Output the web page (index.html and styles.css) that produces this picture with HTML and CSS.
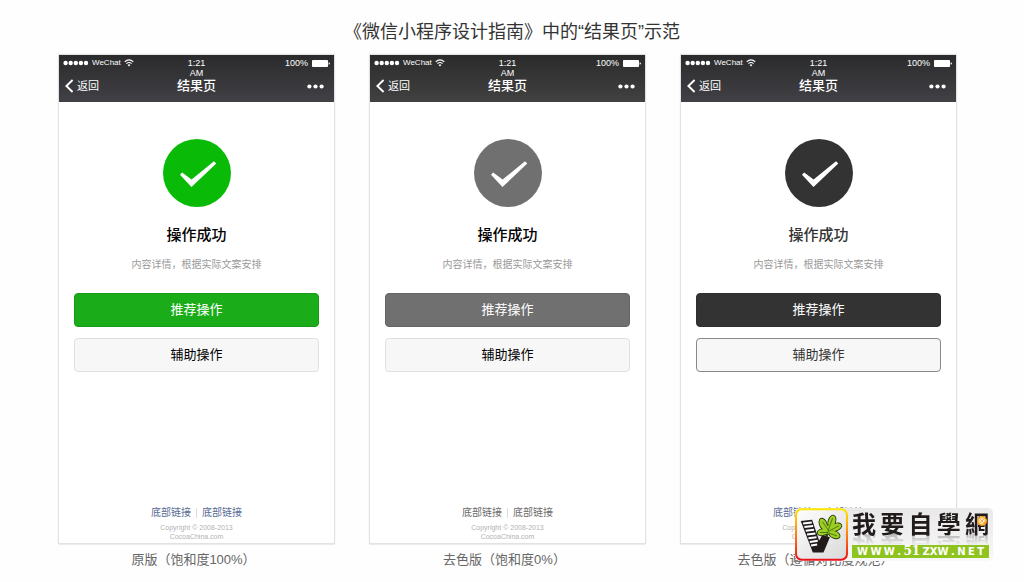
FILE: index.html
```html
<!DOCTYPE html>
<html lang="zh-CN">
<head>
<meta charset="utf-8">
<meta name="viewport" content="width=device-width, initial-scale=1">
<title>结果页示范</title>
<link rel="stylesheet" href="styles.css">
</head>
<body>
<svg class="sprite" aria-hidden="true">
  <symbol id="signal" viewBox="0 0 26 6"><g fill="#fff"><circle cx="2.6" cy="3" r="2.2"/><circle cx="7.7" cy="3" r="2.2"/><circle cx="12.8" cy="3" r="2.2"/><circle cx="17.9" cy="3" r="2.2"/><circle cx="23" cy="3" r="2.2"/></g></symbol>
  <symbol id="wifi" viewBox="0 0 10 8"><g fill="none" stroke="#fff" stroke-width="1.1"><path d="M.7 2.9Q5-1.1 9.3 2.9"/><path d="M2.4 4.7Q5 2.4 7.6 4.7"/></g><path d="M3.6 5.9Q5 4.8 6.4 5.9L5 7.4Z" fill="#fff"/></symbol>
  <symbol id="battery" viewBox="0 0 18 7"><rect width="16" height="7" rx=".8" fill="#fff"/><path d="M16.6 2.2Q18 2.6 18 3.5T16.6 4.8Z" fill="#fff"/></symbol>
  <symbol id="back" viewBox="0 0 9 14"><path d="M7.6 1L1.4 7L7.6 13" fill="none" stroke="#fff" stroke-width="1.9"/></symbol>
  <symbol id="more" viewBox="0 0 17 5"><g fill="#fff"><circle cx="2.4" cy="2.5" r="2.1"/><circle cx="8.5" cy="2.5" r="2.1"/><circle cx="14.6" cy="2.5" r="2.1"/></g></symbol>
  <symbol id="done" viewBox="0 0 68 68"><circle cx="34" cy="34" r="34" fill="currentColor"/><path d="M17 35.8L19.2 33.6L28.6 40.6L51 22.3L53.3 24.5L28.5 48Z" fill="#fff"/></symbol>
</svg>

<h1 class="page-title">《微信小程序设计指南》中的“结果页”示范</h1>

<main class="samples">
  <figure class="sample sample--original">
    <section class="phone">
      <header class="bar">
        <div class="status">
          <span class="carrier"><svg class="signal"><use href="#signal"/></svg>WeChat<svg class="wifi"><use href="#wifi"/></svg></span>
          <span class="time">1:21<br>AM</span>
          <span class="power">100%<svg class="battery"><use href="#battery"/></svg></span>
        </div>
        <nav class="nav">
          <button class="back" type="button"><svg class="back-icon"><use href="#back"/></svg>返回</button>
          <h2 class="nav-title">结果页</h2>
          <button class="more" type="button" aria-label="更多"><svg class="more-icon"><use href="#more"/></svg></button>
        </nav>
      </header>
      <div class="result">
        <svg class="done"><use href="#done"/></svg>
        <h3 class="result-title">操作成功</h3>
        <p class="result-text">内容详情，根据实际文案安排</p>
        <div class="actions">
          <button class="btn btn--primary" type="button">推荐操作</button>
          <button class="btn btn--default" type="button">辅助操作</button>
        </div>
      </div>
      <footer class="foot">
        <div class="links"><a href="#">底部链接</a><a href="#">底部链接</a></div>
        <p class="copyright">Copyright © 2008-2013<br>CocoaChina.com</p>
      </footer>
    </section>
    <figcaption class="caption">原版（饱和度100%）</figcaption>
  </figure>

  <figure class="sample sample--gray">
    <section class="phone">
      <header class="bar">
        <div class="status">
          <span class="carrier"><svg class="signal"><use href="#signal"/></svg>WeChat<svg class="wifi"><use href="#wifi"/></svg></span>
          <span class="time">1:21<br>AM</span>
          <span class="power">100%<svg class="battery"><use href="#battery"/></svg></span>
        </div>
        <nav class="nav">
          <button class="back" type="button"><svg class="back-icon"><use href="#back"/></svg>返回</button>
          <h2 class="nav-title">结果页</h2>
          <button class="more" type="button" aria-label="更多"><svg class="more-icon"><use href="#more"/></svg></button>
        </nav>
      </header>
      <div class="result">
        <svg class="done"><use href="#done"/></svg>
        <h3 class="result-title">操作成功</h3>
        <p class="result-text">内容详情，根据实际文案安排</p>
        <div class="actions">
          <button class="btn btn--primary" type="button">推荐操作</button>
          <button class="btn btn--default" type="button">辅助操作</button>
        </div>
      </div>
      <footer class="foot">
        <div class="links"><a href="#">底部链接</a><a href="#">底部链接</a></div>
        <p class="copyright">Copyright © 2008-2013<br>CocoaChina.com</p>
      </footer>
    </section>
    <figcaption class="caption">去色版（饱和度0%）</figcaption>
  </figure>

  <figure class="sample sample--contrast">
    <section class="phone">
      <header class="bar">
        <div class="status">
          <span class="carrier"><svg class="signal"><use href="#signal"/></svg>WeChat<svg class="wifi"><use href="#wifi"/></svg></span>
          <span class="time">1:21<br>AM</span>
          <span class="power">100%<svg class="battery"><use href="#battery"/></svg></span>
        </div>
        <nav class="nav">
          <button class="back" type="button"><svg class="back-icon"><use href="#back"/></svg>返回</button>
          <h2 class="nav-title">结果页</h2>
          <button class="more" type="button" aria-label="更多"><svg class="more-icon"><use href="#more"/></svg></button>
        </nav>
      </header>
      <div class="result">
        <svg class="done"><use href="#done"/></svg>
        <h3 class="result-title">操作成功</h3>
        <p class="result-text">内容详情，根据实际文案安排</p>
        <div class="actions">
          <button class="btn btn--primary" type="button">推荐操作</button>
          <button class="btn btn--default" type="button">辅助操作</button>
        </div>
      </div>
      <footer class="foot">
        <div class="links"><a href="#">底部链接</a><a href="#">底部链接</a></div>
        <p class="copyright">Copyright © 2008-2013<br>CocoaChina.com</p>
      </footer>
    </section>
    <figcaption class="caption">去色版（遵循对比度规范）</figcaption>
  </figure>
</main>

<aside class="watermark">
  <svg class="mark" viewBox="29 26 158 156" aria-hidden="true">
    <defs>
      <linearGradient id="frame" x1="0" y1="0" x2="0" y2="1"><stop offset="0" stop-color="#ffe800"/><stop offset=".45" stop-color="#ff8a14"/><stop offset="1" stop-color="#e8141c"/></linearGradient>
      <linearGradient id="plate" x1="0" y1="0" x2="1" y2="1"><stop offset="0" stop-color="#fff"/><stop offset="1" stop-color="#d9d9d9"/></linearGradient>
      <g id="leaf">
        <ellipse cx="139" cy="65" rx="10" ry="18" transform="rotate(18 139 65)"/>
        <ellipse cx="113" cy="73" rx="10" ry="17" transform="rotate(-22 113 73)"/>
        <ellipse cx="111" cy="97" rx="15" ry="9" transform="rotate(-12 111 97)"/>
        <ellipse cx="151" cy="82" rx="17" ry="10" transform="rotate(-22 151 82)"/>
        <ellipse cx="146" cy="104" rx="17" ry="10" transform="rotate(24 146 104)"/>
        <circle cx="128" cy="90" r="13"/>
      </g>
    </defs>
    <rect x="32" y="29" width="152" height="150" rx="17" fill="url(#plate)" stroke="url(#frame)" stroke-width="6"/>
    <path d="M46 64L80 60L101 122L111 105L133 112L114 158L82 158Z" fill="#211c1b"/>
    <g stroke="#fff" stroke-width="6"><path d="M53 71L79 68"/><path d="M57 82L83 79"/><path d="M61 93L86 90"/><path d="M65 104L90 101"/><path d="M69 115L93 112"/><path d="M73 126L97 123"/><path d="M77 137L95 134"/></g>
    <path d="M120 120L128 92" stroke="#211c1b" stroke-width="7"/>
    <use href="#leaf" fill="#27330d" stroke="#27330d" stroke-width="5"/>
    <use href="#leaf" fill="#9bcf22"/>
    <path d="M124 112C125 98 132 80 141 56M126 98L104 98M128 91L111 66M128 95L160 78M127 99L154 108" fill="none" stroke="#3f6a12" stroke-width="2.5"/>
  </svg>
  <div class="brand">
    <div class="brand-name"><span>我</span><span>要</span><span>自</span><span>學</span><span>網</span><svg class="swirl" viewBox="0 0 10 10" aria-hidden="true"><circle cx="5" cy="5" r="5" fill="#f7a21b"/><path d="M6.6 5A1.6 1.6 0 1 1 5 3.4Q7 3.5 6.7 5.7Q8.5 5.5 8 3.8Q6.5 1.3 3.8 2.1Q1.3 3.5 2.1 6.3Q3.5 8.5 6.5 7.8" fill="none" stroke="#fff" stroke-width=".8"/></svg></div>
    <a class="brand-url" href="#"><span>W</span><span>W</span><span>W</span><span>.</span><span class="digits">51</span><span>ZXW</span><span>.</span><span>N</span><span>E</span><span>T</span></a>
  </div>
</aside>
</body>
</html>
```

FILE: styles.css
```css
* { box-sizing: border-box; }

body {
  position: relative;
  display: flex;
  flex-direction: column;
  min-height: 100vh;
  margin: 0;
  padding: 19px 0 13px;
  background: #fefefe;
  color: #000;
  font-family: "Liberation Sans", "Noto Sans CJK SC", sans-serif;
}

h1, h2, h3, p, figure { margin: 0; font-weight: 400; }

button {
  padding: 0;
  border: 0;
  background: none;
  color: inherit;
  font-family: inherit;
}

svg { display: block; flex: none; }

.sprite { position: absolute; width: 0; height: 0; }

.page-title {
  padding-bottom: 10px;
  color: #333;
  font-size: 18px;
  line-height: 26px;
  text-align: center;
}

.samples {
  flex: 1;
  display: grid;
  grid-template-columns: repeat(3, 1fr);
  gap: 36px;
  padding: 0 68px 0 59px;
}

.sample { display: flex; flex-direction: column; }

.sample--original { --mark: #09bb07; --primary: #1aad19; --edge: #179b16; --link: #576b95; --bar-top: #2b2b2e; --bar-end: #414145; }
.sample--gray { --mark: #707070; --primary: #707070; --edge: #646464; --link: #6b6b6b; --bar-top: #2b2b2b; --bar-end: #414141; }
.sample--contrast { --mark: #333; --primary: #333; --edge: #2e2e2e; --link: #576b95; --bar-top: #2b2b2e; --bar-end: #414145; }

.phone {
  flex: 1;
  display: flex;
  flex-direction: column;
  background: #fff;
  box-shadow: 0 0 1px 1px #e2e2e2, 0 1px 1px #999;
}

.bar {
  padding: 3px 4px 8px 4px;
  background: linear-gradient(var(--bar-top), var(--bar-end));
  color: #fff;
}

.status, .nav {
  display: grid;
  grid-template-columns: 1fr auto 1fr;
}

.status { font-size: 9px; line-height: 10px; }

.carrier, .power {
  display: flex;
  align-items: center;
  height: 10px;
}

.carrier { gap: 3px; font-size: 8px; }
.power { justify-content: flex-end; gap: 4px; }
.time { text-align: center; }
.signal { width: 26px; height: 6px; }
.wifi { width: 10px; height: 8px; }
.battery { width: 18px; height: 7px; }

.nav { align-items: center; line-height: 16px; }

.back {
  justify-self: start;
  display: flex;
  align-items: center;
  gap: 3px;
  padding-left: 2px;
  font-size: 11px;
  line-height: 16px;
}

.back-icon { width: 9px; height: 14px; }
.nav-title { font-size: 13px; font-weight: 500; }
.more { justify-self: end; padding-right: 6px; }
.more-icon { width: 17px; height: 5px; }

.result {
  flex: 1;
  display: flex;
  flex-direction: column;
  align-items: center;
  padding: 37px 15px 0;
}

.done { width: 68px; height: 68px; color: var(--mark); }

.result-title {
  padding-top: 17px;
  font-size: 15px;
  font-weight: 500;
  line-height: 22px;
}

.result-text {
  padding-top: 11px;
  color: #999;
  font-size: 10px;
  line-height: 16px;
}

.actions {
  align-self: stretch;
  display: grid;
  gap: 11px;
  padding-top: 20px;
}

.btn {
  border: 1px solid;
  border-radius: 4px;
  font-size: 13px;
  line-height: 32px;
}

.btn--primary { border-color: var(--edge); background: var(--primary); color: #fff; }
.btn--default { border-color: #e0e0e0; background: #f7f7f7; }

.sample--contrast .result-title,
.sample--contrast .btn--default { color: #333; }
.sample--contrast .btn--default { border-color: #888; }

.foot { padding-bottom: 2px; text-align: center; }

.links {
  display: flex;
  justify-content: center;
  font-size: 10px;
  line-height: 10px;
}

.links a { padding: 0 5px; color: var(--link); text-decoration: none; }
.links a + a { border-left: 1px solid #ddd; }

.copyright {
  padding-top: 5px;
  color: #b2b2b2;
  font-size: 7px;
  line-height: 9px;
}

.caption {
  padding: 7px 6px 0 0;
  color: #666;
  font-size: 13px;
  line-height: 19px;
  text-align: center;
}

.watermark {
  position: absolute;
  right: 31px;
  bottom: 21px;
  display: flex;
  gap: 4px;
  width: 198px;
  padding-right: 4px;
  border-radius: 5px;
  background: linear-gradient(#e9e9e9, #f8f8f8);
}

.mark { width: 53px; height: 53px; }

.brand {
  flex: 1;
  display: flex;
  flex-direction: column;
  justify-content: space-between;
  padding: 3px 0;
}

.brand-name {
  position: relative;
  display: flex;
  justify-content: space-between;
  height: 23px;
  color: #211c1b;
  font: 700 24px/23px "Noto Sans CJK TC", sans-serif;
  -webkit-box-reflect: below -1px linear-gradient(transparent 45%, rgba(0, 0, 0, 0.3));
}

.swirl { position: absolute; top: 5px; right: 2px; width: 10px; height: 10px; }

.brand-url {
  display: flex;
  align-items: center;
  justify-content: space-between;
  height: 13px;
  padding: 0 5px;
  background: #8fc31f;
  color: #fff;
  font: 700 10px/13px "DejaVu Sans", sans-serif;
  text-decoration: none;
}

.digits { font: 700 12px/13px "DejaVu Serif", serif; }
```
